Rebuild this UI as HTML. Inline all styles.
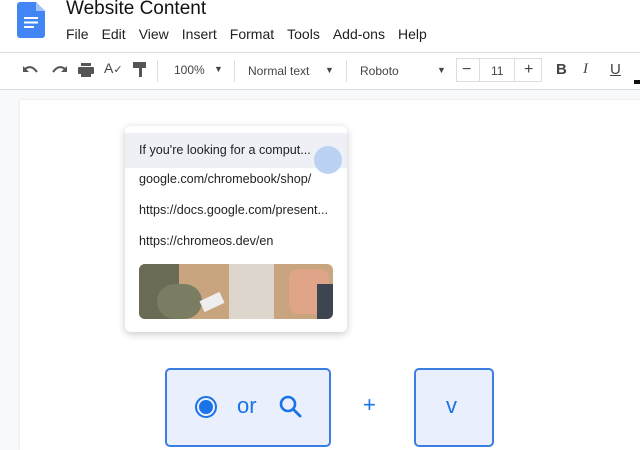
<!DOCTYPE html>
<html><head><style>
body{margin:0;width:640px;height:450px;overflow:hidden;font-family:"Liberation Sans",Arial,sans-serif;background:#f8f9fa;position:relative}
.a{position:absolute}
.menu span{margin-right:13px}
.tb{color:#444;font-size:12px}
.pt{font-size:12.6px;color:#222}
</style></head><body>
<div class="a" style="left:0;top:0;width:640px;height:52px;background:#fff"></div>
<svg class="a" style="left:17px;top:2px" width="28" height="36" viewBox="0 0 28 36"><path d="M3 0h16l9 9v24a3 3 0 0 1-3 3H3a3 3 0 0 1-3-3V3a3 3 0 0 1 3-3z" fill="#4285f4"/><path d="M19 0v9h9z" fill="#a1c2fa"/><rect x="7" y="15" width="14" height="2" fill="#fff"/><rect x="7" y="19.5" width="14" height="2" fill="#fff"/><rect x="7" y="24" width="10" height="2" fill="#fff"/></svg>
<div class="a" style="left:66px;top:-2px;font-size:19px;color:#111">Website Content</div>
<div class="a menu" style="left:66px;top:26px;font-size:14px;color:#222"><span>File</span><span>Edit</span><span>View</span><span>Insert</span><span>Format</span><span>Tools</span><span>Add-ons</span><span>Help</span></div>
<div class="a" style="left:0;top:52px;width:640px;height:36px;background:#fff;border-top:1px solid #e0e0e0;border-bottom:1px solid #dadce0"></div>
<svg class="a" style="left:22px;top:63px" width="46" height="14"><path d="M3 6 Q9 1 15 9" fill="none" stroke="#555" stroke-width="2"/><path d="M1 3v6h6z" fill="#555"/><path d="M43 6 Q37 1 31 9" fill="none" stroke="#555" stroke-width="2"/><path d="M45 3v6h-6z" fill="#555"/></svg>
<svg class="a" style="left:78px;top:63px" width="16" height="14"><rect x="3" y="0" width="10" height="3" fill="#555"/><rect x="0" y="4" width="16" height="7" rx="1" fill="#555"/><rect x="3" y="9" width="10" height="5" fill="#555"/></svg>
<div class="a tb" style="left:104px;top:60px;font-size:14px">A<span style="font-size:11px">✓</span></div>
<svg class="a" style="left:133px;top:62px" width="14" height="16"><rect x="0" y="0" width="13" height="6" fill="#555"/><rect x="6" y="6" width="3" height="9" fill="#555"/></svg>
<div class="a" style="left:157px;top:60px;width:1px;height:22px;background:#ddd"></div>
<div class="a tb" style="left:174px;top:63px">100%</div><div class="a tb" style="left:214px;top:64px;font-size:9px">▼</div>
<div class="a" style="left:234px;top:60px;width:1px;height:22px;background:#ddd"></div>
<div class="a tb" style="left:248px;top:64px">Normal text</div><div class="a tb" style="left:325px;top:65px;font-size:9px">▼</div>
<div class="a" style="left:346px;top:60px;width:1px;height:22px;background:#ddd"></div>
<div class="a tb" style="left:360px;top:64px">Roboto</div><div class="a tb" style="left:437px;top:65px;font-size:9px">▼</div>
<div class="a" style="left:456px;top:58px;width:86px;height:24px;border:1px solid #ddd;box-sizing:border-box"></div>
<div class="a" style="left:479px;top:58px;width:36px;height:24px;border-left:1px solid #ddd;border-right:1px solid #ddd;box-sizing:border-box"></div>
<div class="a tb" style="left:462px;top:61px;font-size:16px">−</div>
<div class="a tb" style="left:491px;top:64px">11</div>
<div class="a tb" style="left:524px;top:61px;font-size:16px">+</div>
<div class="a tb" style="left:556px;top:61px;font-size:15px;font-weight:bold">B</div>
<div class="a tb" style="left:583px;top:61px;font-size:15px;font-style:italic;font-family:'Liberation Serif',serif">I</div>
<div class="a tb" style="left:610px;top:61px;font-size:15px;text-decoration:underline">U</div>
<div class="a" style="left:634px;top:80px;width:6px;height:4px;background:#111"></div>
<div class="a" style="left:20px;top:100px;width:620px;height:350px;background:#fff;box-shadow:0 0 2px #ddd"></div>
<div class="a" style="left:125px;top:126px;width:222px;height:206px;background:#fff;border-radius:6px;box-shadow:0 2px 8px rgba(0,0,0,.22)"></div>
<div class="a" style="left:125px;top:133px;width:222px;height:35px;background:#eef0f6"></div>
<div class="a pt" style="left:139px;top:143px">If you're looking for a comput...</div>
<div class="a" style="left:314px;top:146px;width:28px;height:28px;border-radius:50%;background:#bcd2f3"></div>
<div class="a pt" style="left:139px;top:172px">google.com/chromebook/shop/</div>
<div class="a pt" style="left:139px;top:203px">https://docs.google.com/present...</div>
<div class="a pt" style="left:139px;top:234px">https://chromeos.dev/en</div>
<div class="a" style="left:139px;top:264px;width:194px;height:55px;border-radius:6px;overflow:hidden;background:#c9a57f">
<div class="a" style="left:0;top:0;width:40px;height:55px;background:#6b6a55"></div>
<div class="a" style="left:18px;top:20px;width:45px;height:35px;background:#7a7d62;border-radius:20px"></div>
<div class="a" style="left:90px;top:0;width:45px;height:55px;background:#ddd6cc"></div>
<div class="a" style="left:62px;top:32px;width:22px;height:12px;background:#eee;transform:rotate(-25deg)"></div>
<div class="a" style="left:150px;top:5px;width:40px;height:45px;background:#e0a589;border-radius:10px"></div>
<div class="a" style="left:178px;top:20px;width:16px;height:35px;background:#3d4550"></div>
</div>
<div class="a" style="left:165px;top:368px;width:166px;height:79px;border:2px solid #3b7de0;border-radius:5px;background:#e9effc;box-sizing:border-box"></div>
<svg class="a" style="left:194px;top:395px" width="24" height="24"><circle cx="12" cy="12" r="10" fill="none" stroke="#1a73e8" stroke-width="2"/><circle cx="12" cy="12" r="7" fill="#1a73e8"/></svg>
<div class="a" style="left:237px;top:393px;font-size:22px;color:#1a73e8">or</div>
<svg class="a" style="left:279px;top:395px" width="24" height="24"><circle cx="9" cy="9" r="7" fill="none" stroke="#1a73e8" stroke-width="2.6"/><path d="M14 14l7 7" stroke="#1a73e8" stroke-width="2.8" stroke-linecap="round"/></svg>
<div class="a" style="left:363px;top:392px;font-size:22px;color:#1a73e8">+</div>
<div class="a" style="left:414px;top:368px;width:80px;height:79px;border:2px solid #3b7de0;border-radius:5px;background:#e9effc;box-sizing:border-box"></div>
<div class="a" style="left:446px;top:393px;font-size:22px;color:#1a73e8">v</div>
</body></html>
